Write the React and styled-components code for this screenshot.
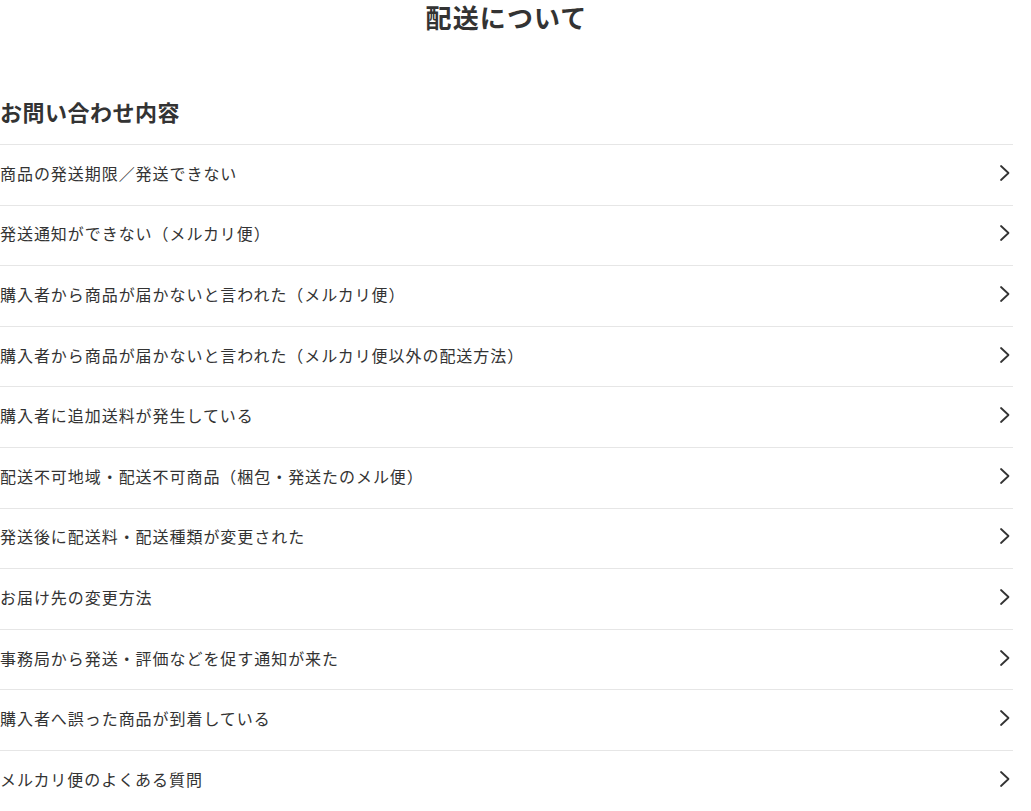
import React from 'react';
import styled, { createGlobalStyle } from 'styled-components';

const GlobalStyle = createGlobalStyle`
  html, body {
    margin: 0;
    padding: 0;
    background: #fff;
  }
  body {
    font-family: "Noto Sans CJK JP", "Noto Sans", sans-serif;
    color: #333;
  }
`;

const Page = styled.div`
  width: 1013px;
`;

const Title = styled.h1`
  margin: 0;
  font-size: 26px;
  line-height: 34px;
  font-weight: 700;
  letter-spacing: 1.1px;
  text-align: center;
  color: #333;
`;

const SectionTitle = styled.h2`
  margin: 62px 0 0;
  font-size: 22px;
  line-height: 30px;
  font-weight: 700;
  letter-spacing: 0.5px;
  color: #333;
  padding-bottom: 18px;
  border-bottom: 1px solid #e6e6e6;
`;

const List = styled.ul`
  list-style: none;
  margin: 0;
  padding: 0;
`;

const Row = styled.li`
  box-sizing: border-box;
  display: flex;
  align-items: center;
  justify-content: space-between;
  height: 60.6px;
  padding-bottom: 4px;
  border-bottom: 1px solid #e6e6e6;
  font-size: 16px;
  letter-spacing: 0.95px;
  color: #333;
  cursor: pointer;
`;

const Chevron = () => (
  <svg width="12" height="18" viewBox="0 0 12 18" fill="none" style={{ marginRight: 2 }}>
    <path d="M2 2 L9.5 9 L2 16" stroke="#333" strokeWidth="1.8" strokeLinecap="round" strokeLinejoin="round" />
  </svg>
);

const items = [
  '商品の発送期限／発送できない',
  '発送通知ができない（メルカリ便）',
  '購入者から商品が届かないと言われた（メルカリ便）',
  '購入者から商品が届かないと言われた（メルカリ便以外の配送方法）',
  '購入者に追加送料が発生している',
  '配送不可地域・配送不可商品（梱包・発送たのメル便）',
  '発送後に配送料・配送種類が変更された',
  'お届け先の変更方法',
  '事務局から発送・評価などを促す通知が来た',
  '購入者へ誤った商品が到着している',
  'メルカリ便のよくある質問',
];

const App = () => {
  return (
    <>
      <GlobalStyle />
      <Page>
        <Title>配送について</Title>
        <SectionTitle>お問い合わせ内容</SectionTitle>
        <List>
          {items.map(item => (
            <Row key={item}>
              <span>{item}</span>
              <Chevron />
            </Row>
          ))}
        </List>
      </Page>
    </>
  );
};

export default App;
